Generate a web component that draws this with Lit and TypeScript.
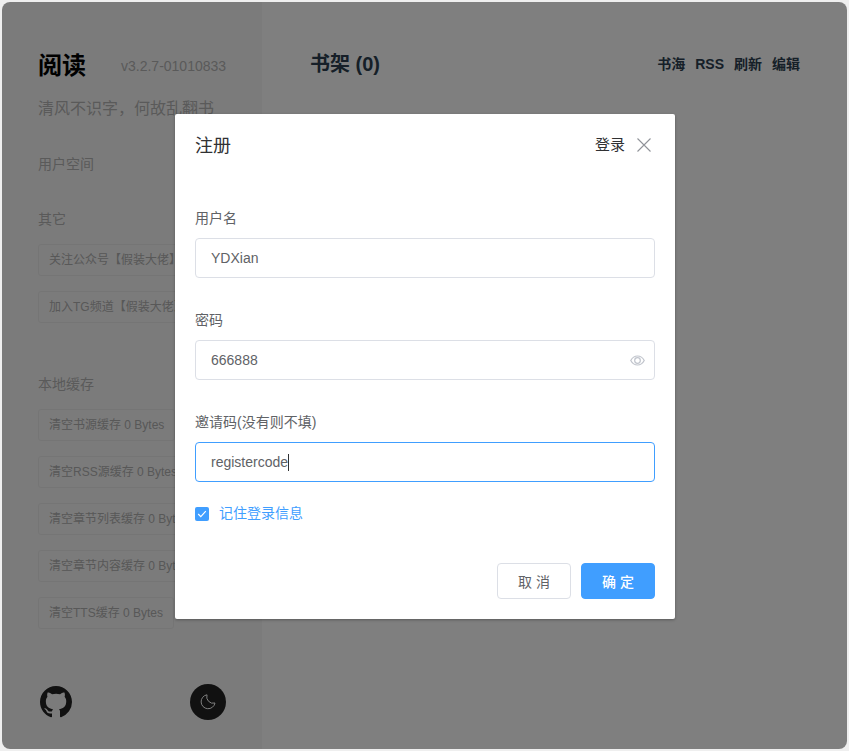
import { LitElement, html, css } from "lit";
import { customElement } from "lit/decorators.js";

@customElement("app-root")
export class AppRoot extends LitElement {
  static styles = css`
    :host {
      display: block;
      height: 751px;
      background: #efefef;
      font-family: "Liberation Sans", "Noto Sans CJK SC", sans-serif;
      overflow: hidden;
    }
    * { box-sizing: border-box; }
    .frame {
      position: relative;
      width: 845px;
      height: 747px;
      margin: 2px;
      display: flex;
      background: #fff;
      border-radius: 8px;
      overflow: hidden;
    }
    .sidebar {
      width: 260px;
      flex: none;
      background: #f7f7f7;
      padding: 48px 0 29px 36px;
      display: flex;
      flex-direction: column;
      overflow: hidden;
    }
    .brand { display: flex; align-items: center; height: 32px; }
    .brand h1 { margin: 0; font-size: 24px; font-weight: 700; color: #000; width: 83px; line-height: 32px; }
    .version { font-size: 14px; color: #b4b4b4; }
    .slogan { margin-top: 15px; font-size: 16px; line-height: 24px; color: #b4b4b4; white-space: nowrap; }
    .section { font-size: 14px; line-height: 20px; color: #b4b4b4; }
    .space { margin-top: 33px; }
    .other { margin-top: 35px; }
    .cache { margin-top: 51px; }
    .list { display: flex; flex-direction: column; align-items: flex-start; gap: 15px; margin-top: 15px; }
    .chip {
      height: 32px;
      padding: 0 10px;
      border: 1px solid #ebebeb;
      border-radius: 3px;
      font-size: 12px;
      line-height: 30px;
      color: #b0b0b0;
      white-space: nowrap;
    }
    .foot { margin-top: auto; display: flex; align-items: center; justify-content: space-between; width: 188px; }
    .gh { width: 32px; height: 32px; margin-left: 2px; display: block; color: #222; }
    .moon {
      width: 36px;
      height: 36px;
      border-radius: 50%;
      background: #222;
      display: flex;
      align-items: center;
      justify-content: center;
    }
    .main { flex: 1; padding: 46px 47px 0 48px; }
    .top { display: flex; justify-content: space-between; align-items: center; height: 28px; }
    .top h2 { margin: 0; font-size: 20px; font-weight: 700; color: #2c3e50; }
    .actions { display: flex; align-items: baseline; gap: 10px; padding-top: 4px; font-size: 14px; line-height: 20px; font-weight: 700; color: #2c3e50; }
    .overlay { position: absolute; inset: 0; background: rgba(0, 0, 0, 0.5); }
    .modal {
      width: 500px;
      height: 505px;
      margin: 112px 0 0 173px;
      background: #fff;
      border-radius: 2px;
      box-shadow: 0 1px 3px rgba(0, 0, 0, 0.3);
      display: flex;
      flex-direction: column;
    }
    .head { padding: 20px 20px 10px; display: flex; align-items: center; justify-content: space-between; }
    .head .title { font-size: 18px; line-height: 24px; color: #303133; }
    .head .right { display: flex; align-items: center; gap: 12px; margin: 0 4px 2px 0; font-size: 15px; line-height: 1; color: #303133; }
    .head .right span { margin-bottom: 2px; }
    .close { display: block; width: 14px; height: 14px; }
    .body { padding: 30px 20px; }
    .label { height: 40px; line-height: 40px; font-size: 14px; color: #606266; }
    .item { margin-bottom: 22px; }
    .input {
      height: 40px;
      border: 1px solid #dcdfe6;
      border-radius: 4px;
      padding: 0 15px;
      display: flex;
      align-items: center;
      justify-content: space-between;
      font-size: 14px;
      color: #606266;
    }
    .input.focus { border-color: #409eff; justify-content: flex-start; }
    .caret { width: 1px; height: 17px; background: #303133; }
    .eye { display: block; width: 15px; height: 15px; margin-right: -6px; }
    .check { display: flex; align-items: center; height: 19px; color: #409eff; font-size: 14px; line-height: 1; }
    .check .text { margin-bottom: 2px; }
    .box {
      width: 14px;
      height: 14px;
      border-radius: 2px;
      background: #409eff;
      margin-right: 10px;
      display: flex;
      align-items: center;
      justify-content: center;
    }
    .footer { display: flex; justify-content: flex-end; gap: 10px; padding: 10px 20px 20px; }
    .btn {
      width: 74px;
      height: 36px;
      border-radius: 4px;
      border: 1px solid #dcdfe6;
      background: #fff;
      color: #606266;
      font-family: inherit;
      font-size: 14px;
      padding: 0;
    }
    .btn.primary { background: #409eff; border-color: #409eff; color: #fff; font-weight: 500; }
  `;

  private chips(items: string[]) {
    return html`<div class="list">${items.map((t) => html`<div class="chip">${t}</div>`)}</div>`;
  }

  render() {
    return html`
      <div class="frame">
        <aside class="sidebar">
          <div class="brand"><h1>阅读</h1><span class="version">v3.2.7-01010833</span></div>
          <div class="slogan">清风不识字，何故乱翻书</div>
          <div class="section space">用户空间</div>
          <div class="section other">其它</div>
          ${this.chips(["关注公众号【假装大佬】", "加入TG频道【假装大佬】"])}
          <div class="section cache">本地缓存</div>
          ${this.chips([
            "清空书源缓存 0 Bytes",
            "清空RSS源缓存 0 Bytes",
            "清空章节列表缓存 0 Bytes",
            "清空章节内容缓存 0 Bytes",
            "清空TTS缓存 0 Bytes",
          ])}
          <div class="foot">
            <svg class="gh" viewBox="0 0 16 16" fill="currentColor"><path d="M8 0C3.58 0 0 3.58 0 8c0 3.54 2.29 6.53 5.47 7.59.4.07.55-.17.55-.38 0-.19-.01-.82-.01-1.49-2.01.37-2.53-.49-2.69-.94-.09-.23-.48-.94-.82-1.13-.28-.15-.68-.52-.01-.53.63-.01 1.08.58 1.23.82.72 1.21 1.87.87 2.33.66.07-.52.28-.87.51-1.07-1.78-.2-3.64-.89-3.64-3.95 0-.87.31-1.59.82-2.15-.08-.2-.36-1.02.08-2.12 0 0 .67-.21 2.2.82.64-.18 1.32-.27 2-.27s1.36.09 2 .27c1.53-1.04 2.2-.82 2.2-.82.44 1.1.16 1.92.08 2.12.51.56.82 1.27.82 2.15 0 3.07-1.87 3.75-3.65 3.95.29.25.54.73.54 1.48 0 1.07-.01 1.93-.01 2.2 0 .21.15.46.55.38A8.01 8.01 0 0 0 16 8c0-4.42-3.58-8-8-8z"/></svg>
            <div class="moon">
              <svg width="16" height="16" viewBox="0 0 16 16" fill="none" stroke="#fff" stroke-width="1"><path d="M7 .8A7 7 0 1 0 15 9 6.5 6.5 0 0 1 7 .8z"/></svg>
            </div>
          </div>
        </aside>
        <main class="main">
          <div class="top">
            <h2>书架 (0)</h2>
            <div class="actions"><span>书海</span><span>RSS</span><span>刷新</span><span>编辑</span></div>
          </div>
        </main>
        <div class="overlay">
          <div class="modal">
            <div class="head">
              <span class="title">注册</span>
              <span class="right">
                <span>登录</span>
                <svg class="close" viewBox="0 0 14 14" stroke="#909399" stroke-width="1.1" fill="none"><path d="M.5.5l13 13M13.5.5l-13 13"/></svg>
              </span>
            </div>
            <div class="body">
              <div class="item">
                <div class="label">用户名</div>
                <div class="input">YDXian</div>
              </div>
              <div class="item">
                <div class="label">密码</div>
                <div class="input">
                  <span>666888</span>
                  <svg class="eye" viewBox="0 0 16 12" fill="none" stroke="#c0c4cc" stroke-width="1.3"><path d="M.8 6C2.4 3 5 1.2 8 1.2S13.6 3 15.2 6C13.6 9 11 10.8 8 10.8S2.4 9 .8 6z"/><circle cx="8" cy="6" r="3"/></svg>
                </div>
              </div>
              <div class="item">
                <div class="label">邀请码(没有则不填)</div>
                <div class="input focus"><span>registercode</span><span class="caret"></span></div>
              </div>
              <div class="check">
                <span class="box"><svg width="10" height="8" viewBox="0 0 10 8" fill="none" stroke="#fff" stroke-width="1.2"><path d="M1.2 4l2.6 2.6L8.8 1.2"/></svg></span>
                <span class="text">记住登录信息</span>
              </div>
            </div>
            <div class="footer">
              <button class="btn">取 消</button>
              <button class="btn primary">确 定</button>
            </div>
          </div>
        </div>
      </div>
    `;
  }
}
